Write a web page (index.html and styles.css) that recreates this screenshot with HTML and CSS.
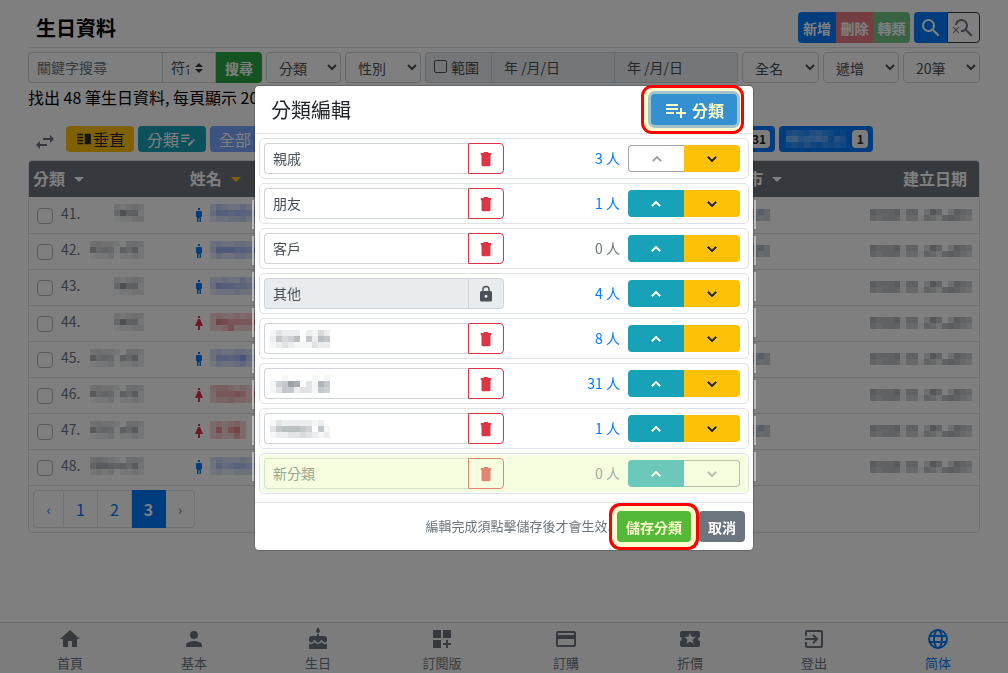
FILE: index.html
```html
<!DOCTYPE html>
<html lang="zh-Hant">
<head>
<meta charset="utf-8">
<meta name="viewport" content="width=device-width, initial-scale=1">
<title>生日資料</title>
<link rel="stylesheet" href="styles.css">
</head>
<body>
<svg class="sprite" aria-hidden="true">
  <symbol id="i-search" viewBox="0 0 24 24"><path d="M15.5 14h-.79l-.28-.27A6.47 6.47 0 0 0 16 9.5 6.5 6.5 0 1 0 9.5 16c1.61 0 3.09-.59 4.23-1.57l.27.28v.79l5 4.99L20.49 19zm-6 0a4.5 4.5 0 1 1 0-9 4.5 4.5 0 0 1 0 9z"/></symbol>
  <symbol id="i-search-off" viewBox="0 0 24 24"><path d="M15.5 14h-.79l-.28-.27A6.47 6.47 0 0 0 16 9.5 6.5 6.5 0 0 0 9.5 3C6.08 3 3.28 5.64 3.03 9h2.02C5.3 6.75 7.18 5 9.5 5a4.5 4.5 0 0 1 0 9c-.17 0-.33-.03-.5-.05v2.02c.17.02.33.03.5.03 1.61 0 3.09-.59 4.23-1.57l.27.28v.79l5 4.99L20.49 19z"/><path d="M6.47 10.82 4 13.29l-2.47-2.47-.71.71L3.29 14 .82 16.47l.71.71L4 14.71l2.47 2.47.71-.71L4.71 14l2.47-2.47z"/></symbol>
  <symbol id="i-swap" viewBox="0 0 24 24"><path d="M6.99 11 3 15l3.99 4v-3H14v-2H6.99zM21 9l-3.99-4v3H10v2h7.01v3z"/></symbol>
  <symbol id="i-split" viewBox="0 0 24 24"><path d="M3 15h8v-2H3zm0 4h8v-2H3zm0-8h8V9H3zm0-6v2h8V5zm10 0h8v14h-8z"/></symbol>
  <symbol id="i-note" viewBox="0 0 24 24"><path d="M3 10h11v2H3zm0-2h11V6H3zm0 8h7v-2H3zm15-3.1.7-.7c.4-.4 1-.4 1.4 0l.7.7c.4.4.4 1 0 1.4l-.7.7zm-.7.7L12 18.900V21h2.100l5.300-5.300z"/></symbol>
  <symbol id="i-add" viewBox="0 0 24 24"><path d="M14 10H2v2h12zm0-4H2v2h12zm4 8v-4h-2v4h-4v2h4v4h2v-4h4v-2zM2 16h8v-2H2z"/></symbol>
  <symbol id="i-trash" viewBox="0 0 24 24"><path d="M5 4h3.500l1-1.500h5l1 1.500H19v3h-1v12.500a2 2 0 0 1-2 2H8a2 2 0 0 1-2-2V7H5z"/></symbol>
  <symbol id="i-lock" viewBox="0 0 24 24"><path d="M18 8h-1V6A5 5 0 0 0 7 6v2H6a2 2 0 0 0-2 2v10c0 1.100.9 2 2 2h12a2 2 0 0 0 2-2V10a2 2 0 0 0-2-2zm-6 9a2 2 0 1 1 0-4 2 2 0 0 1 0 4zm3.100-9H8.900V6a3.100 3.100 0 0 1 6.200 0z"/></symbol>
  <symbol id="i-up" viewBox="0 0 24 24"><path d="M12 8l-6 6 1.410 1.410L12 10.830l4.590 4.580L18 14z" stroke="currentColor"/></symbol>
  <symbol id="i-down" viewBox="0 0 24 24"><path d="M16.590 8.590 12 13.170 7.410 8.590 6 10l6 6 6-6z" stroke="currentColor"/></symbol>
  <symbol id="i-man" viewBox="0 0 6 14"><path d="M2 0h2v2H2zM1 3h4a1 1 0 0 1 1 1v5H5v5H3.500v-4h-1v4H1V9H0V4a1 1 0 0 1 1-1z"/></symbol>
  <symbol id="i-woman" viewBox="0 0 8 14"><path d="M3 0h2v2H3zM3 3h2l3 7H5v4H3v-4H0z"/></symbol>
  <symbol id="i-home" viewBox="0 0 24 24"><path d="M10 20v-6h4v6h5v-8h3L12 3 2 12h3v8z"/></symbol>
  <symbol id="i-person" viewBox="0 0 24 24"><path d="M12 12a4 4 0 1 0 0-8 4 4 0 0 0 0 8zm0 2c-2.670 0-8 1.340-8 4v2h16v-2c0-2.660-5.330-4-8-4z"/></symbol>
  <symbol id="i-cake" viewBox="0 0 24 24"><path d="M12 6a2 2 0 0 0 1.710-3.030L12 0l-1.710 2.970A2 2 0 0 0 12 6zm4.600 9.990-1.070-1.070-1.080 1.070c-1.300 1.300-3.580 1.310-4.890 0l-1.070-1.070-1.090 1.070A3.500 3.500 0 0 1 3 16.500V21c0 .55.45 1 1 1h16c.55 0 1-.45 1-1v-4.500a3.500 3.500 0 0 1-4.400-.51zM18 9h-5V7h-2v2H6a3 3 0 0 0-3 3v1.540a2 2 0 0 0 3.380 1.380l2.140-2.130 2.130 2.130c.74.74 2.030.74 2.770 0l2.140-2.130 2.130 2.130A2 2 0 0 0 21 13.540V12a3 3 0 0 0-3-3z"/></symbol>
  <symbol id="i-widgets" viewBox="0 0 24 24"><path d="M3 3h8v8H3zm10 0h8v8h-8zM3 13h8v8H3zm15 0h-2v3h-3v2h3v3h2v-3h3v-2h-3z"/></symbol>
  <symbol id="i-card" viewBox="0 0 24 24"><path d="M20 4H4a2 2 0 0 0-2 2v12c0 1.100.9 2 2 2h16a2 2 0 0 0 2-2V6a2 2 0 0 0-2-2zm0 14H4v-6h16zm0-10H4V6h16z"/></symbol>
  <symbol id="i-ticket" viewBox="0 0 24 24"><path d="M20 12a2 2 0 0 1 2-2V6a2 2 0 0 0-2-2H4a2 2 0 0 0-2 2v4a2 2 0 0 1 0 4v4c0 1.100.9 2 2 2h16a2 2 0 0 0 2-2v-4a2 2 0 0 1-2-2zm-4.420 4.800L12 14.500l-3.580 2.300 1.080-4.120-3.290-2.690 4.240-.25L12 5.800l1.540 3.950 4.240.25-3.290 2.690z"/></symbol>
  <symbol id="i-exit" viewBox="0 0 24 24"><path d="M10.090 15.590 11.500 17l5-5-5-5-1.410 1.410L12.670 11H3v2h9.670zM19 3H5a2 2 0 0 0-2 2v4h2V5h14v14H5v-4H3v4c0 1.100.9 2 2 2h14a2 2 0 0 0 2-2V5a2 2 0 0 0-2-2z"/></symbol>
  <symbol id="i-globe" viewBox="0 0 24 24"><g fill="none" stroke="currentColor" stroke-width="1.900"><circle cx="12" cy="12" r="9"/><ellipse cx="12" cy="12" rx="4" ry="9"/><path d="M4 9h16M4 15h16"/></g></symbol>
</svg>

<div class="page">
  <header class="page-head">
    <h1 class="page-title">生日資料</h1>
    <div class="head-actions">
      <div class="btn-group">
        <button class="btn btn-blue">新增</button>
        <button class="btn btn-red" disabled>刪除</button>
        <button class="btn btn-green" disabled>轉類</button>
      </div>
      <div class="btn-group">
        <button class="btn btn-blue" aria-label="搜尋"><svg class="icon icon-lg"><use href="#i-search"/></svg></button>
        <button class="btn btn-outline" aria-label="清除搜尋"><svg class="icon icon-lg"><use href="#i-search-off"/></svg></button>
      </div>
    </div>
  </header>

  <form class="filters">
    <div class="search-group">
      <input class="field keyword" type="text" placeholder="關鍵字搜尋" aria-label="關鍵字搜尋">
      <select class="field match" aria-label="符合方式"><option>符合</option></select>
      <button class="btn btn-green" type="button">搜尋</button>
    </div>
    <select class="field pick" aria-label="分類"><option>分類</option></select>
    <select class="field pick" aria-label="性別"><option>性別</option></select>
    <div class="range-group">
      <label class="range-check"><input class="range-box" type="checkbox">範圍</label>
      <input class="field range-date" type="text" value="年 /月/日" aria-label="開始日期" disabled>
      <input class="field range-date" type="text" value="年 /月/日" aria-label="結束日期" disabled>
    </div>
    <select class="field pick" aria-label="姓名"><option>全名</option></select>
    <select class="field pick" aria-label="排序"><option>遞增</option></select>
    <select class="field pick" aria-label="每頁筆數"><option>20筆</option></select>
  </form>

  <p class="summary">找出 48 筆生日資料, 每頁顯示 20 筆</p>

  <div class="chips">
    <svg class="icon swap"><use href="#i-swap"/></svg>
    <button class="chip chip-yellow"><svg class="icon"><use href="#i-split"/></svg>垂直</button>
    <button class="chip chip-teal">分類<svg class="icon"><use href="#i-note"/></svg></button>
    <button class="chip chip-all">全部 <span class="badge">48</span></button>
    <button class="chip chip-tag">親戚 <span class="badge">3</span></button>
    <button class="chip chip-tag">朋友 <span class="badge">1</span></button>
    <button class="chip chip-tag">其他 <span class="badge">4</span></button>
    <button class="chip chip-count" aria-label="分類 8"><span class="mosaic" data-cells="5656565655 9a98879865 3435344345"></span><span class="badge">8</span></button>
    <button class="chip chip-count" aria-label="分類 31"><span class="mosaic" data-cells="5656565655 9a98879865 3435344345"></span><span class="badge">31</span></button>
    <button class="chip chip-count" aria-label="分類 1"><span class="mosaic" data-cells="4543564312 9a67787264 3435324343"></span><span class="badge">1</span></button>
  </div>

  <div class="panel">
    <table class="list">
      <colgroup><col class="c-cat"><col class="c-name"><col class="c-city"><col class="c-date"></colgroup>
      <thead>
        <tr><th>分類<i class="caret"></i></th><th>姓名<i class="caret caret-on"></i></th><th>城市<i class="caret"></i></th><th class="right">建立日期</th></tr>
      </thead>
      <tbody id="rows"></tbody>
    </table>
    <nav class="pager" aria-label="分頁">
      <a class="pager-link pager-arrow" href="#">‹</a>
      <a class="pager-link" href="#">1</a>
      <a class="pager-link" href="#">2</a>
      <a class="pager-link pager-current" href="#" aria-current="page">3</a>
      <a class="pager-link pager-arrow pager-off" href="#">›</a>
    </nav>
  </div>
</div>

<nav class="tabbar" aria-label="主選單">
  <a class="tab" href="#"><svg class="icon icon-lg"><use href="#i-home"/></svg>首頁</a>
  <a class="tab" href="#"><svg class="icon icon-lg"><use href="#i-person"/></svg>基本</a>
  <a class="tab" href="#"><svg class="icon icon-lg"><use href="#i-cake"/></svg>生日</a>
  <a class="tab" href="#"><svg class="icon icon-lg"><use href="#i-widgets"/></svg>訂閱版</a>
  <a class="tab" href="#"><svg class="icon icon-lg"><use href="#i-card"/></svg>訂購</a>
  <a class="tab" href="#"><svg class="icon icon-lg"><use href="#i-ticket"/></svg>折價</a>
  <a class="tab" href="#"><svg class="icon icon-lg"><use href="#i-exit"/></svg>登出</a>
  <a class="tab tab-on" href="#"><svg class="icon icon-lg"><use href="#i-globe"/></svg>简体</a>
</nav>

<div class="backdrop">
  <section class="modal" role="dialog" aria-labelledby="modal-title">
    <header class="modal-head">
      <h2 class="modal-title" id="modal-title">分類編輯</h2>
      <button class="btn add-btn"><svg class="icon icon-lg"><use href="#i-add"/></svg>分類</button>
    </header>
    <ul class="groups" id="groups"></ul>
    <footer class="modal-foot">
      <span class="hint">編輯完成須點擊儲存後才會生效.</span>
      <button class="btn save-btn">儲存分類</button>
      <button class="btn btn-gray">取消</button>
    </footer>
  </section>
</div>
<script src="app.js"></script>
</body>
</html>
```

FILE: styles.css
```css
* { box-sizing: border-box; }

body {
  margin: 0;
  min-height: 100vh;
  display: flex;
  flex-direction: column;
  background: #fff;
  color: #000;
  font-family: "Noto Sans CJK TC", "Noto Sans", sans-serif;
  font-size: 14px;
  line-height: 20px;
}

button, input, select { font: inherit; margin: 0; }
a { text-decoration: none; }

.sprite { display: none; }
.icon { width: 18px; height: 18px; fill: currentColor; flex: none; }
.icon-lg { width: 24px; height: 24px; }

.page { flex: 1; padding: 0 28px; }

.page-head {
  display: flex;
  align-items: center;
  justify-content: space-between;
  height: 48px;
  padding: 8px 0 0 8px;
  border-bottom: 1px solid #dee2e6;
}
.page-title { margin: 0; font-size: 20px; line-height: 28px; }
.head-actions { display: flex; gap: 4px; }

.btn {
  display: inline-flex;
  align-items: center;
  justify-content: center;
  height: 31px;
  padding: 0 8px;
  border: 1px solid transparent;
  border-radius: 4px;
  color: #fff;
  font-weight: 700;
  white-space: nowrap;
}
.btn-group { display: flex; }
.btn-group .btn { min-width: 33px; padding: 0 3px; }
.btn-group .btn:first-child:nth-last-child(3) { padding: 0 4px; }
.btn-group .btn:not(:first-child) { border-top-left-radius: 0; border-bottom-left-radius: 0; }
.btn-group .btn:not(:last-child) { border-top-right-radius: 0; border-bottom-right-radius: 0; }
.btn-blue { background: #007bff; }
.btn-red { background: #dc3545; }
.btn-green { background: #28a745; }
.btn-gray { background: #6c757d; }
.btn-outline { background: transparent; border-color: #343a40; color: #6c757d; }
.btn:disabled { opacity: .65; }
.btn-group .btn:disabled { min-width: 37px; }

.filters {
  display: grid;
  grid-template-columns: 234fr 75fr 76fr 313fr 77fr 76fr 77fr;
  gap: 4px;
  margin-top: 4px;
}
.field {
  min-width: 0;
  height: 31px;
  border: 1px solid #ced4da;
  border-radius: 4px;
  background: transparent;
  color: #495057;
  padding: 0 8px 2px;
}
.field::placeholder { color: #6c757d; opacity: 1; }
.search-group, .range-group { display: flex; min-width: 0; }
.search-group > *:not(:first-child), .range-group > *:not(:first-child) { border-top-left-radius: 0; border-bottom-left-radius: 0; }
.search-group > *:not(:last-child), .range-group > *:not(:last-child) { border-top-right-radius: 0; border-bottom-right-radius: 0; }
.keyword { flex: 1; border-right: 0; }
.match {
  width: 54px;
  appearance: none;
  padding: 0 26px 2px 8px;
  text-overflow: clip;
  background: url("data:image/svg+xml,%3csvg xmlns='http://www.w3.org/2000/svg' width='8' height='10' viewBox='0 0 4 5'%3e%3cpath fill='%23343a40' d='M2 0L0 2h4zm0 5L0 3h4z'/%3e%3c/svg%3e") no-repeat right 12px center;
}
.pick { width: 100%; padding: 0 4px 0 8px; }
.range-check {
  display: flex;
  align-items: center;
  gap: 4px;
  width: 66px;
  padding: 0 8px 2px;
  border: 1px solid #ced4da;
  border-right: 0;
  border-radius: 4px;
  background: #e9ecef;
  color: #495057;
}
.range-box, .row-check {
  appearance: none;
  flex: none;
  width: 13px;
  height: 13px;
  margin: 0;
  border: 1px solid #495057;
  border-radius: 2px;
}
.range-date { flex: 1; padding: 0 12px 2px; background: #e9ecef; }
.range-date:last-child { border-left: 0; }

.summary { margin: 2px 0 0; font-size: 16px; line-height: 24px; }

.chips { display: flex; gap: 4px; margin: 17px 0 8px; height: 26px; }
.swap { width: 24px; height: 24px; margin: 4px 5px 0 5px; color: #6c757d; }
.chip {
  display: inline-flex;
  align-items: center;
  justify-content: center;
  height: 26px;
  padding: 0;
  border: 0;
  border-radius: 4px;
  background: #007bff;
  color: #fff;
  font-size: 16px;
  white-space: nowrap;
}
.chip-yellow { width: 68px; background: #ffc107; color: #212529; }
.chip-teal { width: 68px; background: #17a2b8; }
.chip-all { width: 69px; gap: 4px; padding-left: 9px; justify-content: flex-start; background: #79a8ff; }
.chip-all .badge { margin-right: 4px; }
.chip-tag { width: 94px; gap: 4px; }
.chip-count { padding: 0 5px 0 7px; gap: 6px; color: #b9d9ff; }
.badge {
  min-width: 16px;
  height: 18px;
  padding: 0 4px;
  border-radius: 4px;
  background: #f8f9fa;
  color: #212529;
  font-size: 12px;
  font-weight: 700;
  line-height: 18px;
}

.panel { border: 1px solid #dee2e6; border-radius: 4px; overflow: hidden; }
.list { width: 100%; border-collapse: collapse; table-layout: fixed; }
.c-cat { width: 16.5%; }
.c-name { width: 57%; }
.c-city { width: 12.5%; }
.c-date { width: 14%; }
.list th {
  height: 36px;
  padding: 0 12px 2px 4px;
  background: #6c757d;
  color: #fff;
  font-size: 16px;
  text-align: left;
}
.list th.right { text-align: right; }
.list td { height: 36px; padding: 0 7px 0 4px; border-bottom: 1px solid #dee2e6; color: #6c757d; }
.caret {
  display: inline-block;
  margin-left: 9px;
  vertical-align: 3px;
  border: 5px solid transparent;
  border-top-color: #fff;
  border-bottom: 0;
}
.caret-on { border-top-color: #ffc107; }
.cell { display: flex; align-items: center; }
.cell-num { width: 29px; margin: 0 0 4px 8px; }
.cell-cat { display: flex; flex: none; justify-content: flex-end; width: 54px; margin-bottom: 3px; }
.row-check { width: 16px; height: 16px; margin: 2px 0 0 4px; border-color: #adb5bd; border-radius: 4px; }
.cell-name { gap: 7px; padding-left: 5px; }
.person { width: 8px; height: 14px; }
.male { color: #007bff; }
.female { color: #dc3545; }
.cell-name .mosaic { margin-bottom: 3px; }
.cell-name .male .mosaic { color: #4a70ec; }
.cell-city { justify-content: flex-start; color: #5a7285; padding-left: 9px; }
.cell-date { justify-content: flex-end; color: #4a5058; }
.mosaic { display: block; flex: none; }
.mosaic svg { display: block; fill: currentColor; shape-rendering: crispEdges; }

.pager { display: flex; padding: 4px; }
.pager-link {
  display: flex;
  align-items: center;
  justify-content: center;
  width: 34px;
  height: 38px;
  border: 1px solid #dee2e6;
  border-left: 0;
  color: #007bff;
  font-size: 16px;
}
.pager-arrow { width: 31px; font-size: 14px; border-left: 1px solid #dee2e6; border-radius: 4px 0 0 4px; }
.pager-off { color: #6c757d; border-left: 0; border-radius: 0 4px 4px 0; width: 29px; }
.pager-current { background: #007bff; border-color: #007bff; color: #fff; font-weight: 700; }

.tabbar {
  display: flex;
  padding: 4px 8px 0;
  height: 51px;
  border-top: 1px solid #d6d8da;
  background: #f8f9fa;
}
.tab {
  flex: 1;
  display: flex;
  flex-direction: column;
  align-items: center;
  gap: 2px;
  color: #6c757d;
  font-size: 13px;
  line-height: 20px;
}
.tab-on { color: #007bff; }

.backdrop {
  position: fixed;
  inset: 0;
  padding: 85px 8px 0;
  background: rgba(0, 0, 0, .5);
  overflow: auto;
}
.modal {
  position: relative;
  max-width: 500px;
  margin: 0 auto;
  border: 1px solid rgba(0, 0, 0, .2);
  border-radius: 5px;
  background: #fff;
  background-clip: padding-box;
}
/* light tick marks beside the dialog, one per list row */
.modal::before, .modal::after {
  content: "";
  position: absolute;
  top: 114px;
  left: -3px;
  width: 2px;
  height: 283px;
  background: repeating-linear-gradient(#bbb 0 29px, transparent 29px 36px);
}
.modal::after { left: auto; right: -3px; }

.modal-head {
  display: flex;
  align-items: center;
  justify-content: space-between;
  padding: 8px 16px;
  border-bottom: 1px solid #dee2e6;
  isolation: isolate;
}
.modal-title { margin: 0; font-size: 20px; font-weight: 400; line-height: 28px; color: #212529; }
.add-btn {
  position: relative;
  padding: 0 12px;
  gap: 4px;
  background: #3490d0;
  color: #fcfccc;
  font-size: 16px;
  box-shadow: 0 0 0 3px #a4c4cc;
}
/* highlight frame around the add button */
.add-btn::before {
  content: "";
  position: absolute;
  z-index: -1;
  inset: -10px -8px -10px -11px;
  border: 3px solid #f00;
  border-radius: 11px;
  background: #fcfccc;
}

.groups { display: grid; gap: 4px; margin: 0; padding: 4px 4px 8px; list-style: none; }
.group {
  display: flex;
  align-items: center;
  padding: 4px 8px 4px 4px;
  border: 1px solid #dee2e6;
  border-radius: 5px;
}
.name-group { position: relative; display: flex; width: 240px; }
.name-group .field { flex: 1; border-radius: 4px 0 0 4px; border-right: 0; }
.name-group .mosaic { position: absolute; left: 6px; top: 7px; color: #6c757d; }
.name-group .field:disabled { background: #e9ecef; }
.icon-btn {
  display: flex;
  align-items: center;
  justify-content: center;
  width: 36px;
  height: 31px;
  padding: 0;
  border: 1px solid #dc3545;
  border-radius: 0 4px 4px 0;
  background: transparent;
  color: #dc3545;
}
.icon-lock { border-color: #ced4da; background: #e9ecef; color: #495057; }
.count { flex: 1; padding: 0 8px 2px 0; text-align: right; color: #007bff; }
.count-none { color: #6c757d; }
.move { display: flex; }
.move-btn {
  display: flex;
  align-items: center;
  justify-content: center;
  width: 56px;
  height: 27px;
  padding: 0;
  border: 0;
  background: #17a2b8;
  color: #fff;
  border-radius: 4px 0 0 4px;
}
.move-down { background: #ffc107; color: #212529; border-radius: 0 4px 4px 0; }
.move-btn:disabled { background: transparent; border: 1px solid #a0a5aa; color: #a0a5aa; }
.move-up:disabled { border-right: 0; }
.move-down:disabled { border-left: 0; }

.group-new { background: #f5ffe0; box-shadow: inset 0 0 0 1px #fff; }
.group-new .field { border-color: #d5e3cf; }
.group-new .field::placeholder { color: #98a48e; }
.group-new .icon-btn { border-color: #e48573; color: #e48573; }
.group-new .count { color: #a4ad9b; }
.group-new .move-up { background: #6cc8b8; color: #fbffee; }
.group-new .move-down:disabled { border-color: #b5c0a9; color: #b5c0a9; }

.modal-foot {
  display: flex;
  align-items: center;
  justify-content: flex-end;
  padding: 8px;
  border-top: 1px solid #dee2e6;
}
.hint { color: #6c757d; font-size: 13px; margin-right: 6px; padding-bottom: 1px; }
.save-btn {
  margin-right: 8px;
  background: #54b838;
  color: #fcfccc;
  box-shadow: 0 0 0 5px #fcfccc, 0 0 0 8px #f00;
}
```

FILE: app.js
```js
// Each hex digit is the strength of one 6px mosaic cell.
function mosaicSvg(cells) {
  const lines = cells.split(' ');
  let rects = '';
  lines.forEach((line, y) => [...line].forEach((c, x) => {
    const v = parseInt(c, 16);
    if (v) rects += `<rect x="${x * 6}" y="${y * 6}" width="6" height="6" fill-opacity="${v / 15}"/>`;
  }));
  const w = lines[0].length * 6, h = lines.length * 6;
  return `<svg width="${w}" height="${h}">${rects}</svg>`;
}
const mosaic = (cells) => `<span class="mosaic">${mosaicSvg(cells)}</span>`;
const icon = (id, cls = '') => `<svg class="icon ${cls}"><use href="#${id}"/></svg>`;

const SHORT = '32343 5a772 12233';
const LONG = '343320443 856517582 122302232';
const records = [
  [41, SHORT, 1, '354335344 477676698 233445346', 1],
  [42, LONG, 1, '343344342 488877698 243344333', 1],
  [43, SHORT, 1, '334335344 487766579 233343333', 0],
  [44, SHORT, 0, '343343456 398666687 334733345', 0],
  [45, LONG, 1, '343344342 377679567 243345333', 1],
  [46, LONG, 0, '455434334 366676398 344544356', 0],
  [47, LONG, 0, '343453 383793 343363', 1],
  [48, '454320443 688767583 232302232', 1, '343334333 364566567 232233333', 0],
];
document.getElementById('rows').innerHTML = records.map(([n, cat, male, name, city]) => `
  <tr>
    <td><div class="cell"><input class="row-check" type="checkbox" aria-label="選取 ${n}"><span class="cell-num">${n}.</span><span class="cell-cat">${mosaic(cat)}</span></div></td>
    <td><div class="cell cell-name">${icon(male ? 'i-man' : 'i-woman', 'person ' + (male ? 'male' : 'female'))}<span class="${male ? 'male' : 'female'}">${mosaic(name)}</span></div></td>
    <td><div class="cell cell-city">${city ? mosaic('57675 64645') : ''}</div></td>
    <td><div class="cell cell-date">${mosaic('65556155037503654 54555144154256543')}</div></td>
  </tr>`).join('');

const groups = [
  { name: '親戚', count: 3, first: true },
  { name: '朋友', count: 1 },
  { name: '客戶', count: 0 },
  { name: '其他', count: 4, locked: true },
  { name: '', count: 8, cells: '1322202142 2645706276 1232111322' },
  { name: '', count: 31, cells: '0010000101 156a903186 1366233165' },
  { name: '', count: 1, cells: '1322222120 3677765061 1223343212' },
  { name: '', count: 0, isNew: true },
];
document.getElementById('groups').innerHTML = groups.map((g, i) => `
  <li class="group ${g.isNew ? 'group-new' : ''}">
    <div class="name-group">
      <input class="field" type="text" value="${g.name}" ${g.isNew ? 'placeholder="新分類"' : ''} aria-label="分類名稱 ${i + 1}" ${g.locked ? 'disabled' : ''}>
      ${g.cells ? mosaic(g.cells) : ''}
      <button class="icon-btn ${g.locked ? 'icon-lock' : ''}" aria-label="${g.locked ? '鎖定' : '刪除分類'}">${icon(g.locked ? 'i-lock' : 'i-trash')}</button>
    </div>
    <span class="count ${g.count ? '' : 'count-none'}">${g.count} 人</span>
    <div class="move">
      <button class="move-btn move-up" aria-label="上移" ${g.first ? 'disabled' : ''}>${icon('i-up')}</button>
      <button class="move-btn move-down" aria-label="下移" ${g.isNew ? 'disabled' : ''}>${icon('i-down')}</button>
    </div>
  </li>`).join('');

document.querySelectorAll('.mosaic[data-cells]').forEach((el) => {
  el.innerHTML = mosaicSvg(el.dataset.cells);
});
```
